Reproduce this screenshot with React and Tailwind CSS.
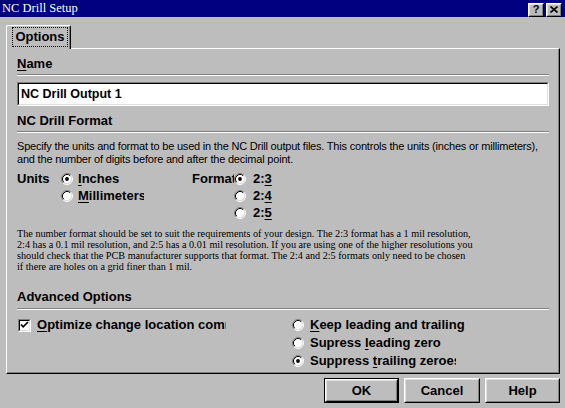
import React from "react";

function Radio({ checked }) {
  return (
    <svg width="12" height="12" viewBox="0 0 12 12" className="shrink-0 block">
      <circle cx="6" cy="6" r="4.6" fill="#fff" />
      <path d="M2.11 9.89A5.5 5.5 0 0 1 9.89 2.11" stroke="#808080" strokeWidth="1" fill="none" />
      <path d="M9.89 2.11A5.5 5.5 0 0 1 2.11 9.89" stroke="#fff" strokeWidth="1" fill="none" />
      <path d="M2.82 9.18A4.5 4.5 0 0 1 9.18 2.82" stroke="#000" strokeWidth="1" fill="none" />
      <path d="M9.18 2.82A4.5 4.5 0 0 1 2.82 9.18" stroke="#dfdfdf" strokeWidth="1" fill="none" />
      {checked && <circle cx="6" cy="6" r="1.9" fill="#000" />}
    </svg>
  );
}

function Check() {
  return (
    <div className="w-[13px] h-[13px] shrink-0 border border-t-[#808080] border-l-[#808080] border-r-white border-b-white">
      <div className="w-full h-full bg-white border border-t-black border-l-black border-r-[#dfdfdf] border-b-[#dfdfdf] flex items-center justify-center">
        <svg width="9" height="9" viewBox="0 0 9 9" className="block">
          <path d="M1 3.5 L3.2 5.8 L8 1" stroke="#000" strokeWidth="1.7" fill="none" />
        </svg>
      </div>
    </div>
  );
}

function Raised({ className = "", children }) {
  return (
    <div className={"border border-t-white border-l-white border-r-black border-b-black bg-[#bdbdbd] " + className}>
      <div className="w-full h-full border border-t-[#dfdfdf] border-l-[#dfdfdf] border-r-[#808080] border-b-[#808080] flex items-center justify-center">
        {children}
      </div>
    </div>
  );
}

function Etched({ className = "" }) {
  return <div className={"h-[2px] border-t border-t-[#808080] border-b border-b-white " + className} />;
}

export default function App() {
  return (
    <div className="w-[565px] h-[408px] overflow-hidden bg-[#bdbdbd] text-black font-['Liberation_Sans',Arial,sans-serif] flex flex-col">
      {/* Title bar */}
      <div className="h-[17px] bg-[#000080] flex items-center justify-between pl-[2px] pr-[3px] shrink-0">
        <span className="text-white text-[12.5px] leading-[17px] font-['Liberation_Serif','Times_New_Roman',serif]">
          NC Drill Setup
        </span>
        <div className="flex gap-[2px] mt-[2px]">
          <Raised className="w-[16px] h-[14px]">
            <span className="text-[11px] font-bold leading-none">?</span>
          </Raised>
          <Raised className="w-[16px] h-[14px]">
            <svg width="8" height="7" viewBox="0 0 8 7" className="block">
              <path d="M0.5 0.5 L7.5 6.5 M7.5 0.5 L0.5 6.5" stroke="#000" strokeWidth="1.6" />
            </svg>
          </Raised>
        </div>
      </div>

      {/* Body */}
      <div className="flex-1 pt-[8px] pl-[6px] pr-[5px] flex flex-col">
        {/* Tab */}
        <div className="relative z-10 -mb-[1px] w-[65px] h-[24px] bg-[#bdbdbd] border-l border-t border-r border-l-white border-t-white border-r-black rounded-t-[2px]">
          <div className="h-full border-r border-r-[#808080] pt-[1px] pl-[5px]">
            <div className="w-[56px] h-[20px] border border-dotted border-black flex items-center justify-center text-[13px] font-bold">
              Options
            </div>
          </div>
        </div>

        {/* Panel */}
        <div className="h-[326px] border-l border-t border-r border-b border-l-white border-t-white border-r-black border-b-black">
          <div className="h-full border-r border-b border-r-[#808080] border-b-[#808080] pl-[10px] pr-[9px] pt-[7px] flex flex-col">
            <div className="h-[16px] leading-[16px] text-[13px] font-bold">
              <span className="underline underline-offset-2">N</span>ame
            </div>
            <Etched className="mt-[2px]" />
            <div className="mt-[6px] h-[24px] border border-t-[#808080] border-l-[#808080] border-r-white border-b-white">
              <div className="h-full bg-white border border-t-black border-l-black border-r-[#dfdfdf] border-b-[#dfdfdf] pl-[2px] flex items-center text-[12.5px] font-bold">
                NC Drill Output 1
              </div>
            </div>

            <div className="mt-[7px] h-[16px] leading-[16px] text-[13px] font-bold">NC Drill Format</div>
            <Etched className="mt-[2px]" />

            <div className="mt-[7px] text-[11px] leading-[13px] tracking-[-0.2px] whitespace-nowrap">
              <div>Specify the units and format to be used in the NC Drill output files. This controls the units (inches or millimeters),</div>
              <div>and the number of digits before and after the decimal point.</div>
            </div>

            {/* Units / Format */}
            <div className="mt-[4px] flex text-[13px] font-bold">
              <div className="w-[44px] h-[17px] flex items-center">Units</div>
              <div className="w-[131px] flex flex-col">
                <div className="h-[17px] flex items-center gap-[5px]">
                  <Radio checked />
                  <span><span className="underline underline-offset-2">I</span>nches</span>
                </div>
                <div className="h-[17px] flex items-center gap-[5px]">
                  <Radio />
                  <span className="w-[66px] overflow-hidden whitespace-nowrap">
                    <span className="underline underline-offset-2">M</span>illimeters
                  </span>
                </div>
              </div>
              <div className="w-[42px] h-[17px] flex items-center overflow-hidden whitespace-nowrap">Format</div>
              <div className="flex flex-col">
                <div className="h-[17px] flex items-center gap-[7px]">
                  <Radio checked />
                  <span>2:<span className="underline underline-offset-2">3</span></span>
                </div>
                <div className="h-[17px] flex items-center gap-[7px]">
                  <Radio />
                  <span>2:<span className="underline underline-offset-2">4</span></span>
                </div>
                <div className="h-[17px] flex items-center gap-[7px]">
                  <Radio />
                  <span>2:<span className="underline underline-offset-2">5</span></span>
                </div>
              </div>
            </div>

            <div className="mt-[7px] text-[10.2px] leading-[11px] whitespace-nowrap font-['Liberation_Serif','Times_New_Roman',serif]">
              <div>The number format should be set to suit the requirements of your design. The 2:3 format has a 1 mil resolution,</div>
              <div>2:4 has a 0.1 mil resolution, and 2:5 has a 0.01 mil resolution. If you are using one of the higher resolutions you</div>
              <div>should check that the PCB manufacturer supports that format. The 2:4 and 2:5 formats only need to be chosen</div>
              <div>if there are holes on a grid finer than 1 mil.</div>
            </div>

            <div className="mt-[17px] h-[16px] leading-[16px] text-[13px] font-bold">Advanced Options</div>
            <Etched className="mt-[3px]" />

            <div className="mt-[6px] flex text-[13px] font-bold">
              <div className="w-[275px] pl-[1px] h-[18px] flex items-center gap-[6px]">
                <Check />
                <span className="w-[189px] overflow-hidden whitespace-nowrap">
                  <span className="underline underline-offset-2">O</span>ptimize change location commands
                </span>
              </div>
              <div className="flex flex-col">
                <div className="h-[18px] flex items-center gap-[6px]">
                  <Radio />
                  <span><span className="underline underline-offset-2">K</span>eep leading and trailing</span>
                </div>
                <div className="h-[18px] flex items-center gap-[6px]">
                  <Radio />
                  <span>Supress <span className="underline underline-offset-2">l</span>eading zero</span>
                </div>
                <div className="h-[18px] flex items-center gap-[6px]">
                  <Radio checked />
                  <span className="w-[146px] overflow-hidden whitespace-nowrap">
                    Suppress <span className="underline underline-offset-2">t</span>railing zeroes
                  </span>
                </div>
              </div>
            </div>
          </div>
        </div>

        {/* Buttons */}
        <div className="mt-[4px] flex justify-end gap-[5px] text-[13px] font-bold">
          <div className="w-[75px] h-[25px] border border-black">
            <Raised className="w-full h-full">OK</Raised>
          </div>
          <Raised className="w-[76px] h-[25px]">Cancel</Raised>
          <Raised className="w-[75px] h-[25px]">Help</Raised>
        </div>
      </div>
    </div>
  );
}
